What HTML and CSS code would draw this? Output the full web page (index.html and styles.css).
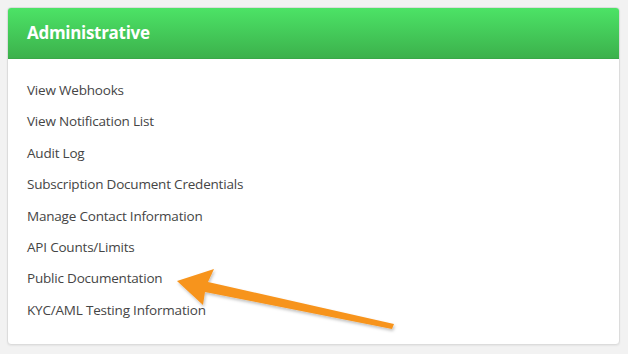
FILE: index.html
```html
<!DOCTYPE html>
<html lang="en">

<head>
  <meta charset="UTF-8">
  <meta name="viewport" content="width=device-width, initial-scale=1.0">
  <title>Administrative</title>
  <link rel="stylesheet" href="styles.css">
</head>

<body>
  <div class="panel">
    <div class="panel__head">
      <h3>Administrative</h3>
    </div>
    <ul class="panel__list">
      <li><a href="#">View Webhooks</a></li>
      <li><a href="#">View Notification List</a></li>
      <li><a href="#">Audit Log</a></li>
      <li><a href="#">Subscription Document Credentials</a></li>
      <li><a href="#">Manage Contact Information</a></li>
      <li><a href="#">API Counts/Limits</a></li>
      <li><a href="#">Public Documentation</a></li>
      <li><a href="#">KYC/AML Testing Information</a></li>
    </ul>
  </div>

  <!-- callout arrow drawn over the panel -->
  <svg class="arrow" width="628" height="354" viewBox="0 0 628 354">
    <defs>
      <filter id="shade" x="-10%" y="-30%" width="120%" height="160%">
        <feDropShadow dx="1" dy="2" stdDeviation="1.5" flood-color="#000" flood-opacity="0.25" />
      </filter>
    </defs>
    <path d="M177 281 L214 269 L208 282 L394 324 L392 329 L205 292 L203 305 Z" fill="#f7941d" filter="url(#shade)" />
  </svg>
</body>

</html>
```

FILE: styles.css
```css
body {
  margin: 0;
  padding: 7px 8px 9px 7px;
  background-color: #f2f2f2;
  font-family: "Open Sans", Arial, sans-serif;
}

.panel {
  background-color: #fff;
  border: 1px solid #dcdcdc;
  border-radius: 4px;
  overflow: hidden;
  box-shadow: 0 1px 2px rgba(0, 0, 0, 0.06);
}

.panel__head {
  height: 48px;
  display: flex;
  align-items: center;
  padding: 0 19px 2px;
  background: linear-gradient(#4ce366, #3cb14c);
  border-bottom: 1px solid #39a848;
}

.panel__head h3 {
  margin: 0;
  color: #fff;
  font-size: 17px;
  font-weight: 700;
  letter-spacing: -0.3px;
}

.panel__list {
  list-style: none;
  margin: 0;
  padding: 16px 19px 18px;
}

.panel__list li {
  font-size: 13.5px;
  line-height: 31.4px;
}

.panel__list a {
  color: #454545;
  text-decoration: none;
  letter-spacing: -0.2px;
}

.arrow {
  position: absolute;
  left: 0;
  top: 0;
  pointer-events: none;
}
```
